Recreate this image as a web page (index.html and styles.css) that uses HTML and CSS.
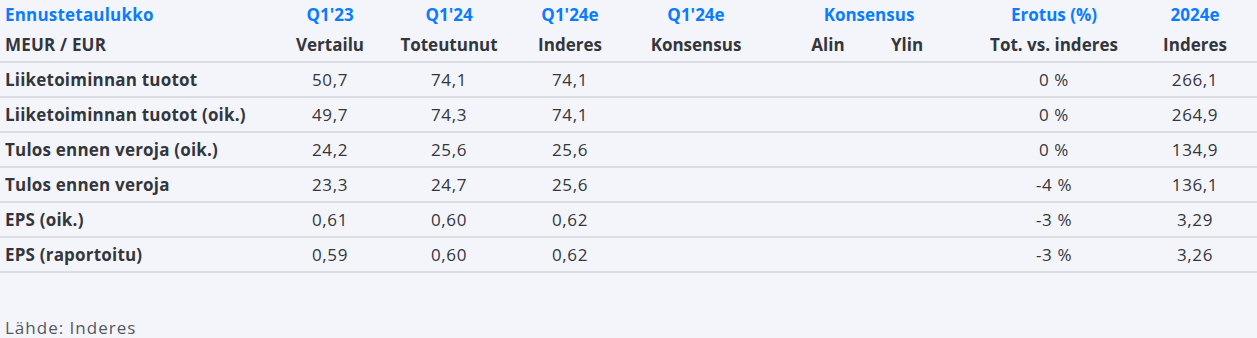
FILE: index.html
```html
<!DOCTYPE html>
<html lang="fi">
<head>
<meta charset="utf-8">
<title>Ennustetaulukko</title>
<link rel="stylesheet" href="styles.css">
</head>
<body>
<div class="table">
  <div class="row head1">
    <div class="cell label">Ennustetaulukko</div>
    <div class="cell">Q1'23</div>
    <div class="cell">Q1'24</div>
    <div class="cell">Q1'24e</div>
    <div class="cell">Q1'24e</div>
    <div class="cell"></div>
    <div class="cell span2">Konsensus</div>
    <div class="cell">Erotus (%)</div>
    <div class="cell">2024e</div>
    <div class="cell"></div>
  </div>
  <div class="row head2">
    <div class="cell label">MEUR / EUR</div>
    <div class="cell">Vertailu</div>
    <div class="cell">Toteutunut</div>
    <div class="cell">Inderes</div>
    <div class="cell">Konsensus</div>
    <div class="cell"></div>
    <div class="cell">Alin</div>
    <div class="cell">Ylin</div>
    <div class="cell">Tot. vs. inderes</div>
    <div class="cell">Inderes</div>
    <div class="cell"></div>
  </div>
  <div class="row body">
    <div class="cell label">Liiketoiminnan tuotot</div>
    <div class="cell">50,7</div><div class="cell">74,1</div><div class="cell">74,1</div><div class="cell"></div><div class="cell"></div><div class="cell"></div><div class="cell"></div><div class="cell">0 %</div><div class="cell">266,1</div><div class="cell"></div>
  </div>
  <div class="row body">
    <div class="cell label">Liiketoiminnan tuotot (oik.)</div>
    <div class="cell">49,7</div><div class="cell">74,3</div><div class="cell">74,1</div><div class="cell"></div><div class="cell"></div><div class="cell"></div><div class="cell"></div><div class="cell">0 %</div><div class="cell">264,9</div><div class="cell"></div>
  </div>
  <div class="row body">
    <div class="cell label">Tulos ennen veroja (oik.)</div>
    <div class="cell">24,2</div><div class="cell">25,6</div><div class="cell">25,6</div><div class="cell"></div><div class="cell"></div><div class="cell"></div><div class="cell"></div><div class="cell">0 %</div><div class="cell">134,9</div><div class="cell"></div>
  </div>
  <div class="row body">
    <div class="cell label">Tulos ennen veroja</div>
    <div class="cell">23,3</div><div class="cell">24,7</div><div class="cell">25,6</div><div class="cell"></div><div class="cell"></div><div class="cell"></div><div class="cell"></div><div class="cell">-4 %</div><div class="cell">136,1</div><div class="cell"></div>
  </div>
  <div class="row body">
    <div class="cell label">EPS (oik.)</div>
    <div class="cell">0,61</div><div class="cell">0,60</div><div class="cell">0,62</div><div class="cell"></div><div class="cell"></div><div class="cell"></div><div class="cell"></div><div class="cell">-3 %</div><div class="cell">3,29</div><div class="cell"></div>
  </div>
  <div class="row body">
    <div class="cell label">EPS (raportoitu)</div>
    <div class="cell">0,59</div><div class="cell">0,60</div><div class="cell">0,62</div><div class="cell"></div><div class="cell"></div><div class="cell"></div><div class="cell"></div><div class="cell">-3 %</div><div class="cell">3,26</div><div class="cell"></div>
  </div>
</div>
<div class="source">Lähde: Inderes</div>
</body>
</html>
```
FILE: styles.css
```css
html, body {
  margin: 0;
  padding: 0;
  background: #f4f5fa;
}
body {
  width: 1257px;
  height: 338px;
  overflow: hidden;
  font-family: "Open Sans", "Liberation Sans", sans-serif;
  font-size: 17px;
  color: #33363d;
}
.table {
  display: flex;
  flex-direction: column;
}
.row {
  display: grid;
  grid-template-columns: 270px 120px 118px 124px 128px 30px 76px 82px 212px 70px 1fr;
  align-items: center;
}
.cell {
  text-align: center;
  white-space: nowrap;
}
.cell.label {
  text-align: left;
  padding-left: 5px;
  font-weight: 700;
  letter-spacing: 0.2px;
}
.span2 {
  grid-column: span 2;
}
.head1 {
  height: 28px;
  color: #0a7cff;
  font-weight: 700;
}
.head2 {
  height: 33px;
  font-weight: 700;
  border-bottom: 2px solid #dcdde3;
}
.body {
  height: 33px;
  border-bottom: 2px solid #dcdde3;
  letter-spacing: 0.6px;
}
.source {
  margin-top: 45px;
  padding-left: 5px;
  line-height: 20px;
  color: #55585f;
  letter-spacing: 1px;
}
```
